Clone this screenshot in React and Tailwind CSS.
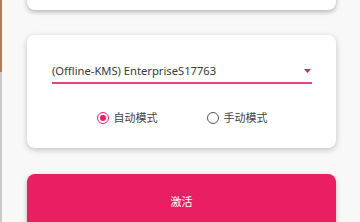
import React, { useState } from 'react';

export default function App() {
  const [mode, setMode] = useState('auto');

  return (
    <div
      className="relative h-[222px] w-[360px] overflow-hidden bg-[#f8f8f8]"
      style={{ fontFamily: '"Noto Sans", "Noto Sans CJK SC", sans-serif' }}
    >
      {/* window edge */}
      <div className="absolute left-0 top-0 flex h-full w-[2px] flex-col">
        <div className="h-[72px] bg-[#b97a52]" />
        <div className="flex-1 bg-[#c9c9c9]" />
      </div>

      <div className="flex flex-col pl-[27px] pr-[24px]">
        <div className="-mt-[20px] h-[30px] rounded-lg bg-white shadow-[0_2px_5px_rgba(0,0,0,0.28)]" />

        <div className="mt-[25px] flex h-[113px] flex-col rounded-lg bg-white pl-[25px] pr-[24px] shadow-[0_2px_6px_rgba(0,0,0,0.22)]">
          <div className="mt-[28px] flex items-center justify-between border-b-2 border-[#e0457c] pb-[3px]">
            <span className="text-[11.2px] leading-[16px] text-[#3a3a3a]">(Offline-KMS) EnterpriseS17763</span>
            <svg width="7" height="4" viewBox="0 0 7 4" className="mr-[1px]">
              <path d="M0 0 L7 0 L3.5 4 Z" fill="#e91e63" />
            </svg>
          </div>

          <div className="mt-[26px] flex items-center justify-center gap-[49px]">
            <button className="flex items-center gap-[5px]" onClick={() => setMode('auto')}>
              <span
                className={`flex h-[12px] w-[12px] items-center justify-center rounded-full border-[1.5px] ${
                  mode === 'auto' ? 'border-[#e91e63]' : 'border-[#555]'
                }`}
              >
                {mode === 'auto' && <span className="h-[6px] w-[6px] rounded-full bg-[#e91e63]" />}
              </span>
              <span className="text-[11px] text-[#444]">自动模式</span>
            </button>
            <button className="flex items-center gap-[5px]" onClick={() => setMode('manual')}>
              <span
                className={`flex h-[12px] w-[12px] items-center justify-center rounded-full border-[1.5px] ${
                  mode === 'manual' ? 'border-[#e91e63]' : 'border-[#555]'
                }`}
              >
                {mode === 'manual' && <span className="h-[6px] w-[6px] rounded-full bg-[#e91e63]" />}
              </span>
              <span className="text-[11px] text-[#444]">手动模式</span>
            </button>
          </div>
        </div>

        <button className="mt-[26px] flex h-[56px] items-center justify-center rounded-lg bg-[#e91e63] text-[11px] text-white shadow-[0_2px_5px_rgba(0,0,0,0.25)]">
          激活
        </button>
      </div>
    </div>
  );
}
